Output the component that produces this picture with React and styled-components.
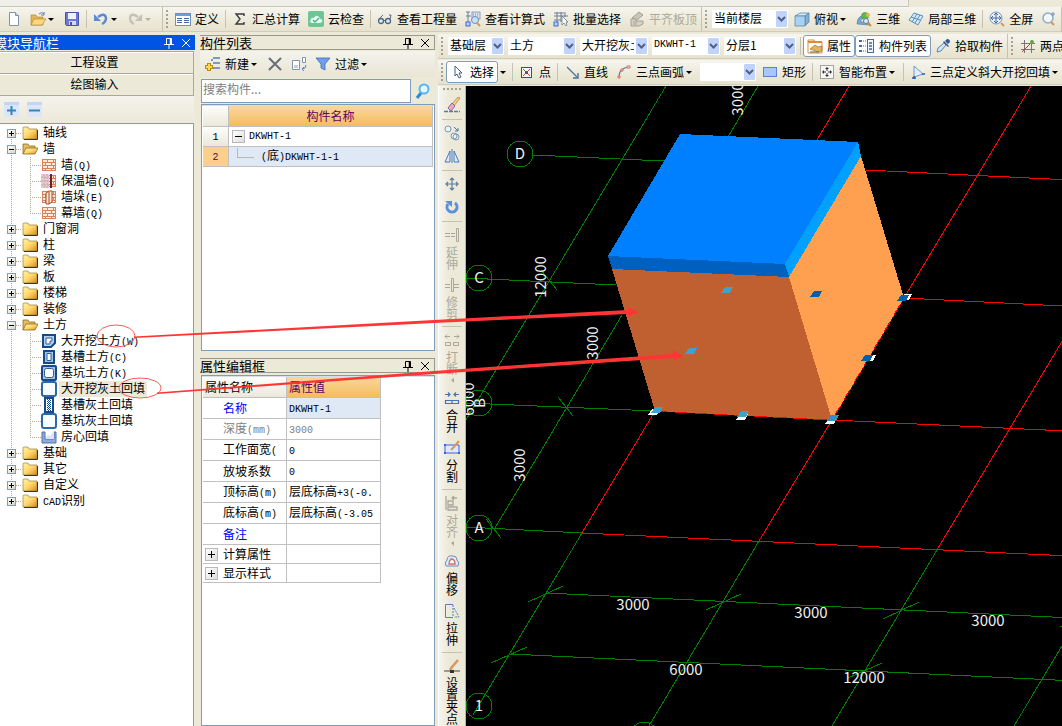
import React from 'react';
import styled, { createGlobalStyle, css } from 'styled-components';

const face = '#ece9d8';
const edge = '#7f9db9';
const line = '#c0c0c0';
const sans = '"Noto Sans CJK SC", "Liberation Sans", sans-serif';

const Global = createGlobalStyle`
  * { box-sizing: border-box; }
  body { margin: 0; background: ${face}; font: 12px/16px ${sans}; color: #000; overflow: hidden; }
  button, input, select { font: inherit; color: inherit; }
  button { background: none; border: 0; padding: 0; margin: 0; white-space: nowrap; }
`;

/* ---------- text ---------- */
const Latin = styled.span`
  font-family: "Liberation Mono", monospace;
  font-size: 10px;
`;
const Txt = ({ children }) =>
  String(children).split(/([\x20-\x7e]+)/).map((s, i) => (i % 2 ? <Latin key={i}>{s}</Latin> : s));

/* ---------- icons ---------- */
const Svg = styled.svg`
  display: block;
  flex: none;
`;
const brick = (
  <>
    <rect x="1" y="2" width="14" height="12" fill="#d8825a" />
    <path d="M2 3h4v2h-4zM7 3h5v2h-5zM13 3h1v2h-1zM2 6h2v2h-2zM5 6h5v2h-5zM11 6h3v2h-3zM2 9h4v2h-4zM7 9h5v2h-5zM13 9h1v2h-1zM2 12h2v1h-2zM5 12h5v1h-5zM11 12h3v1h-3z" fill="#ffe9d8" />
  </>
);
const icons = {
  doc: <><path d="M3.5 1.5h6l3 3v10h-9z" fill="#fdfeff" stroke="#7f93ab" /><path d="M9.5 1.5v3h3" fill="#cdd8e6" stroke="#7f93ab" /></>,
  open: <><path d="M1 14V4h5l1 2h6v8z" fill="#e3b55a" stroke="#a9812f" strokeWidth=".6" /><path d="M1 14l3-6h12l-4 6z" fill="#ffd878" stroke="#a9812f" strokeWidth=".6" /><path d="M9 3q3-3 5 0m0-2v3h-3" fill="none" stroke="#5a7fae" /></>,
  save: <><path d="M1.5 1.5h13v13h-12l-1-1z" fill="#6c78d8" stroke="#4b53a6" /><path d="M4 2h8v6H4z" fill="#eef2fb" /><path d="M5 10h7v4H5z" fill="#d5d9ec" /><path d="M6 11h2v3H6z" fill="#4b53a6" /></>,
  undo: <><path d="M5 6q7-5 8 1 0 4-4 6" fill="none" stroke="#5e88cf" strokeWidth="2.4" /><path d="M1 3v7h7z" fill="#5e88cf" /></>,
  redo: <><path d="M11 6q-7-5-8 1 0 4 4 6" fill="none" stroke="#c4c2b6" strokeWidth="2.4" /><path d="M15 3v7H8z" fill="#c4c2b6" /></>,
  define: <><rect x=".5" y="2.5" width="15" height="12" fill="#fff" stroke="#6f8fbf" /><path d="M1 3h14v2H1z" fill="#6f9be0" /><path d="M2 7.5h5M2 9.5h5M2 11.5h5M9 7.5h5M9 9.5h5M9 11.5h5" stroke="#4468a8" /></>,
  sigma: <path d="M12 5V3H4l4 5-4 5h8v-2" fill="none" stroke="#3a3a3a" strokeWidth="1.4" />,
  cloud: <><rect width="16" height="16" rx="2" fill="#6cc795" /><path d="M4 12q-3-1-1-4 1-2 3-1 2-4 5-1 1 1 1 2 3 0 2 3-1 1-3 1z" fill="#e8fff3" /><path d="M5 9l2 2 4-4" fill="none" stroke="#4bb07c" strokeWidth="1.4" /></>,
  glasses: <><circle cx="4" cy="10" r="2.500" fill="#dfe9f3" stroke="#52657f" strokeWidth="1.300" /><circle cx="11" cy="10" r="2.500" fill="#dfe9f3" stroke="#52657f" strokeWidth="1.300" /><path d="M6.500 9.500h2M2 8l4-4M13 8l1-4h-2" fill="none" stroke="#52657f" /></>,
  formula: <><path d="M1 1h4M1 5h5M3 1v13M1 14h4" stroke="#6b7f9b" /><rect x="7" y="1" width="8" height="7" fill="#dbe4f2" stroke="#7a8faf" strokeWidth=".8" /><path d="M8 3h6M8 5h6" stroke="#7a8faf" strokeDasharray="1" /><circle cx="10" cy="9" r="3.500" fill="#c9e1f7" stroke="#6d90b8" /><path d="M12 12l3 3" stroke="#d59a52" strokeWidth="2" /><rect x="1" y="11" width="4" height="4" fill="#b9d1ff" stroke="#3c68d8" /></>,
  batch: <><path d="M1 2h12M1 5h14M1 9h7M4 1v13M8 1v10M12 3v3" stroke="#6f7f92" /><path d="M9 5v9l2-2 2 3 1-1-1-3h2z" fill="#fff" stroke="#637b98" strokeWidth=".8" /><rect x="1" y="11" width="4" height="4" fill="#b9d1ff" stroke="#3c68d8" /></>,
  align: <><path d="M3 7l7-6 4 3-6 5z" fill="#c9c6b9" stroke="#a3a093" /><path d="M2 8h5v2h7v3l-4 2H2z" fill="#d6d3c6" stroke="#a3a093" /><path d="M4 11h4M4 13h4" stroke="#a3a093" /></>,
  cube: <><path d="M1 5l5-3h9l-4 3z" fill="#cfeaff" stroke="#5f86a8" strokeWidth=".8" /><path d="M11 5l4-3v9l-4 4z" fill="#7fb0d8" stroke="#5f86a8" strokeWidth=".8" /><path d="M1 5h10v10H1z" fill="#a9d2f2" stroke="#5f86a8" strokeWidth=".8" /></>,
  three: <><path d="M1 13q0-6 4-8l2 2q-3 2-2 4l8 0v3z" fill="#78a6d0" stroke="#4a7da8" strokeWidth=".6" /><circle cx="9" cy="5" r="3.500" fill="#66b84d" stroke="#3c8b36" strokeWidth=".6" /><circle cx="12" cy="4" r="2" fill="#e9b44c" /><circle cx="10" cy="10" r="2.500" fill="#d8ecfb" stroke="#5d83a8" /><path d="M12 12l3 3" stroke="#d08a3c" strokeWidth="2" /></>,
  local: <path d="M1 9l5-7 9 3-5 9zM3 6l9 3M9 3l-5 8M12 4l-5 8" fill="#d2e8f8" stroke="#5e8fb8" />,
  full: <><circle cx="7" cy="7" r="6" fill="#e6f0fa" stroke="#7793b8" /><path d="M7 2v10M2 7h10M5 4l2-2 2 2M5 10l2 2 2-2M4 5L2 7l2 2M10 5l2 2-2 2" fill="none" stroke="#496b9c" /><path d="M12 12l3 3" stroke="#d59a52" strokeWidth="2" /></>,
  zoomer: <><circle cx="7" cy="7" r="5" fill="#f3f8fd" stroke="#93a9c4" strokeWidth="1.500" /><path d="M10 11l3 3" stroke="#d59a52" strokeWidth="2" /><path d="M12 1v4M10 3h4" stroke="#7793b8" /></>,
  prop: <><path d="M1 2h6l1 2h7v11H1z" fill="#fff" stroke="#e08b33" /><path d="M1 4h14" stroke="#e08b33" strokeWidth="2" /><path d="M3 11l5-4 3 2 4-1v5l-4 1z" fill="#e2b45c" stroke="#86632a" strokeWidth=".6" /><path d="M3 14h9" stroke="#666" /></>,
  list: <><path d="M0 3h3M0 8h3M0 13h3" stroke="#4168a8" strokeWidth="2" /><path d="M4 3h3M4 8h3M4 13h3" stroke="#4168a8" strokeDasharray="1" /><rect x="8.500" y="1.500" width="6" height="13" fill="#f3f7ff" stroke="#4168a8" /><path d="M10 4h3v2h-3zM10 7h3v2h-3zM10 10h3v2h-3z" fill="#5f88dd" /></>,
  dropper: <><path d="M2 14l1-4 6-5 2 2-5 6z" fill="#cfe5fa" stroke="#5f87b4" /><path d="M8 4l1-1 5 5-1 1zM10 3l2-2q3 0 3 3l-2 2z" fill="#33588f" /></>,
  cross: <><path d="M4.500 2v13M11.500 2v13M1 5.500h14M1 11.500h14" stroke="#777" fill="none" /><path d="M2 14L13 3" stroke="#d04040" /><circle cx="12" cy="4" r="2" fill="#5fa84a" /></>,
  pointer: <path d="M5 2v10l2-2 2 4 2-1-2-4h3z" fill="#fff" stroke="#44607f" />,
  point: <><rect x="2.500" y="3.500" width="10" height="10" fill="#f2f4ff" stroke="#3b4a8c" /><path d="M4 5l7 7M11 5l-7 7" stroke="#d04040" /><circle cx="7.500" cy="8.500" r="1.500" fill="#3b4a8c" /></>,
  lineIcon: <><path d="M3 3l10 10" stroke="#4d6f9e" strokeWidth="1.200" /><path d="M14 9v5H9" fill="none" stroke="#4d6f9e" strokeWidth="1.400" /></>,
  arc: <><path d="M3 13Q3 4 13 3" fill="none" stroke="#5c7ba8" strokeWidth="1.200" /><path d="M2 12h2v2H2zM5 5h2v2H5zM11 2h3v2h-3z" fill="#fff" stroke="#d96a4a" /></>,
  rect: <rect x="1.500" y="3.500" width="13" height="9" fill="#a8c6fb" stroke="#5d82d0" />,
  smart: <><rect x="1.500" y="1.500" width="13" height="13" fill="#f7f7f7" stroke="#555" strokeDasharray="1 1" /><path d="M8 3v4M8 9v4M3 8h4M9 8h4M6.500 4.500h3M6.500 11.500h3M4.500 6.500v3M11.500 6.500v3" stroke="#333" /></>,
  tri3: <><path d="M4 2v11l9-3z" fill="#e2efff" stroke="#6e96cc" /><path d="M2 14h4M4 12v3M12 10h3" stroke="#2e5fa8" strokeWidth="1.500" /></>,
  add: <><path d="M8 2h7M8 7h7M6 12h9M6 4h2" stroke="#7d99bd" strokeWidth="2" /><path d="M4 7v8M0 11h8" stroke="#b78c1c" strokeWidth="4" /><path d="M4 8v6M1 11h6" stroke="#ffd84d" strokeWidth="2" /></>,
  del: <path d="M2 2l12 12M14 2L2 14" stroke="#6a6f76" strokeWidth="2" />,
  copy: <><path d="M1.500 4.500h7v9h-7z" fill="#fff" stroke="#8394a8" /><path d="M3 9h4v3H3z" fill="#c5d0de" /><path d="M11.500 1.500h3v5h-3z" fill="#fff" stroke="#8394a8" /><path d="M15 9q0 4-4 4m2-2l-2 2 2 2" fill="none" stroke="#5b82d6" /></>,
  funnel: <path d="M1 2h14l-5 6v6l-4-2V8z" fill="#6fa0ee" stroke="#4268b6" strokeWidth=".8" />,
  search: <><path d="M6 10l-4 5" stroke="#2a8bd8" strokeWidth="3" /><circle cx="9" cy="6" r="4.500" fill="#e8f6ff" stroke="#56b4f2" strokeWidth="2" /></>,
  plus: <><rect width="15" height="15" fill="#dbe6fb" /><path d="M0 0h15v3H0z" fill="#c6d5f7" /><path d="M7.500 4v9M3 8.500h9" stroke="#2f86c2" strokeWidth="2" /></>,
  minus: <><rect width="15" height="15" fill="#dbe6fb" /><path d="M0 0h15v3H0z" fill="#c6d5f7" /><path d="M2 8.500h11" stroke="#2f86c2" strokeWidth="2" /></>,
  folder: <><path d="M1 3q0-1 1-1h4l1 2h8v10H1z" fill="url(#fold)" stroke="#8c6b28" strokeWidth=".6" /><path d="M15.500 5v9.500H2" fill="none" stroke="#3f3524" /></>,
  folderOpen: <><path d="M1 13V3h5l1 2h6v3" fill="#e6bd5c" stroke="#8c6b28" strokeWidth=".8" /><path d="M1 13l3-6h12l-3 6z" fill="url(#fold)" stroke="#8c6b28" strokeWidth=".8" /></>,
  brick,
  insul: <>{brick}<path d="M0 1h8v14H0z" fill="#e6cfd2" /><path d="M0 4h8M0 8h8M0 12h8M3 1v14M6 1v14" stroke="#c9a0a6" strokeDasharray="2 1" /><path d="M9 1h2v14H9z" fill="#7c1c1c" /></>,
  pier: <>{brick}<path d="M5 4l3-2h3v11l-3 2H5z" fill="#ffe9dc" stroke="#a5491f" /><path d="M8 3v12" stroke="#a5491f" /></>,
  pitL: <><path d="M2 2h12v8l-4 4H2z" fill="#b9cfe8" stroke="#164a86" strokeWidth="2" /><path d="M5 5h6v3H9v3H5z" fill="#fff" stroke="#2b5f9e" /></>,
  trench: <><path d="M3 2h10v12H3z" fill="#a7c3e4" stroke="#164a86" strokeWidth="2" /><path d="M6 4.500h4v7H6z" fill="#fff" stroke="#2b5f9e" /></>,
  pit: <><rect x="1" y="1" width="14" height="14" rx="1" fill="#a7c3e4" stroke="#164a86" strokeWidth="2" /><rect x="3.500" y="3.500" width="9" height="9" rx="2" fill="#fff" stroke="#2b5f9e" /></>,
  fill: <rect x="1" y="1" width="14" height="14" rx="2" fill="#f6fbff" stroke="#2d68a8" strokeWidth="2" />,
  fillTrench: <><path d="M4 1h8v14H4z" fill="#fff" stroke="#164a86" strokeWidth="2" /><path d="M6.500 2v12M8.500 2v12" stroke="#164a86" strokeDasharray="1" /><path d="M7.500 3v12M9.500 3v12" stroke="#164a86" strokeDasharray="1" /></>,
  room: <><path d="M1 3h3v7h9V3h2v11H1z" fill="#8fa9d8" stroke="#5470a8" /><path d="M5 8l2-2 2 1 4-5v8H5z" fill="#d9e5f6" /></>,
  erase: <><path d="M14 0L8 7l2 2 6-8z" fill="#ffd27a" stroke="#8a6a30" strokeWidth=".6" /><path d="M8 6l-4 5 3 3 4-5z" fill="#f0a8c0" stroke="#5a5a90" strokeWidth=".8" /><path d="M0 14.500h16" stroke="#5a7aa8" strokeWidth="1.500" strokeDasharray="4 1" /></>,
  dup: <><circle cx="4" cy="4" r="3" fill="#eef4fb" stroke="#7d97b8" /><path d="M10 2l4 4m0-3v3h-3" fill="none" stroke="#4f78a8" /><circle cx="10" cy="11" r="3" fill="#eef4fb" stroke="#7d97b8" /><circle cx="12" cy="12" r="3" fill="none" stroke="#7d97b8" /></>,
  mirror: <><path d="M6 3v11H1z" fill="#dce9fa" stroke="#4c7bbd" /><path d="M10 3v11h5z" fill="#dce9fa" stroke="#4c7bbd" /><path d="M8 1v14" stroke="#4c7bbd" /></>,
  move: <path d="M8 2v12M2 8h12M6 4l2-2 2 2M6 12l2 2 2-2M4 6L2 8l2 2M12 6l2 2-2 2" fill="none" stroke="#5b7d9e" strokeWidth="1.200" />,
  rotate: <><path d="M4 5a5 5 0 1 0 7-1" fill="none" stroke="#5b8ede" strokeWidth="3" /><path d="M1 2h7v6z" fill="#5b8ede" /></>,
  extend: <path d="M1 6.500h5M1 9.500h5M7 6.500h4M7 9.500h4M12.500 1.500h2v13h-2z" fill="none" stroke="#aaa79a" />,
  trim: <path d="M1 7.500h5M1 10.500h5M7.500 1.500h2v13h-2zM10 7.500h5M10 10.500h5" fill="none" stroke="#aaa79a" />,
  brk: <path d="M6 4.500H1m2-2l-2 2 2 2M10 4.500h5m-2-2l2 2-2 2M1.500 10.500h5v3h-5zM9.500 10.500h5v3h-5z" fill="none" stroke="#aaa79a" />,
  merge: <path d="M1 4.500h5M4 2.500l2 2-2 2M15 4.500h-5m2-2l-2 2 2 2M1.500 10.500h13v3h-13zM8 10v3" fill="none" stroke="#4572b8" strokeWidth="1.200" />,
  split: <><path d="M1 5h14v8H1z" fill="#dfeaff" stroke="#3c5fe0" /><path d="M15 1l-6 7-2 2" stroke="#d29a5a" strokeWidth="2" /><path d="M0 4h2v2H0zM0 12h2v2H0zM14 12h2v2h-2z" fill="#3c5fe0" /></>,
  alignV: <path d="M2 1v14M4 6h5v4H4zM4 12h9v3H4zM13 3H8m2-2L8 3l2 2" fill="none" stroke="#aaa79a" strokeWidth="1.300" />,
  offset: <><path d="M2 13q-2-3 1-6 0-5 6-4 4 0 4 4 3 3 1 6z" fill="#dcebfa" stroke="#6a90b8" /><path d="M5 11q0-3 2-5 4 0 4 5z" fill="#fff" stroke="#d86a6a" strokeWidth="1.400" /></>,
  stretch: <><path d="M9 1.500H1.500v13H9" fill="none" stroke="#5580b8" /><path d="M9 2v12M10 5l5 9h-5" fill="none" stroke="#5580b8" strokeDasharray="2 1" /></>,
  grip: <><path d="M14 2L8 9l-2 3" stroke="#d29a5a" strokeWidth="2.500" /><path d="M0 13h6M10 13h6" stroke="#444" /><rect x="6" y="12" width="4" height="3" fill="#333" /></>,
  pin: <><path d="M5.500 3.500h5v6h-5zM3 9.500h10M8 10v4" fill="none" stroke="currentColor" /><path d="M9.500 4v5" stroke="currentColor" strokeWidth="1.500" /></>,
  close: <path d="M4 4l8 8M12 4l-8 8" fill="none" stroke="currentColor" />,
};
const Icon = ({ name, size = 16 }) => (
  <Svg width={size} height={size} viewBox={`0 0 ${size} ${size}`} aria-hidden="true">{icons[name]}</Svg>
);

/* ---------- toolbars ---------- */
const Bands = styled.div`
  display: flex;
  height: ${(p) => p.$h}px;
  overflow: hidden;
`;
const Band = styled.div`
  display: flex;
  align-items: center;
  flex: ${(p) => (p.$grow ? '1 0 auto' : 'none')};
  height: 25px;
  padding: 0 ${(p) => p.$end || 0}px 0 ${(p) => (p.$bare ? 2 : 3)}px;
  background: linear-gradient(#f6f5ef, #ece9d8 60%, #e6e2cf);
  border-right: 1px solid #c5c2b2;
  border-bottom: 1px solid #cfccbb;
`;
const Grip = styled.span`
  flex: none;
  width: ${(p) => (p.$flat ? 18 : 3)}px;
  height: ${(p) => (p.$flat ? 3 : 18)}px;
  margin-right: ${(p) => (p.$flat ? 0 : 2)}px;
  background: radial-gradient(circle at 1px 1px, #a5a294 1px, transparent 1px) 0 0 / 4px 4px;
`;
const Sep = styled.span`
  flex: none;
  width: 1px;
  height: 18px;
  margin: 0 2px;
  background: #c5c2b0;
`;
const Tool = styled.button`
  display: flex;
  align-items: center;
  flex: none;
  gap: 4px;
  height: 22px;
  padding: 0 4px;
  color: ${(p) => (p.disabled ? '#aca899' : '#000')};
  ${(p) => p.$on && css`
    padding: 0 3px;
    background: #fff;
    border: 1px solid ${edge};
    border-radius: 3px;
  `}
`;
const Caret = styled.span`
  width: 6px;
  height: 3px;
  margin: 0 2px 0 -2px;
  border: solid transparent;
  border-width: 3px 3px 0;
  border-top-color: ${(p) => (p.$dim ? '#b5b2a4' : '#000')};
`;
const DropButton = styled.button`
  display: flex;
  align-items: center;
  flex: none;
  width: 12px;
  height: 22px;
  padding-left: 4px;
`;
const SelectBox = styled.span`
  display: grid;
  flex: none;
  width: ${(p) => p.$w}px;
  height: 18px;
  margin: 0 2px;
  background: #fff;
`;
const SelectField = styled.select`
  grid-area: 1 / 1;
  appearance: none;
  width: 100%;
  border: 0;
  border-radius: 0;
  padding: 0 14px 2px 2px;
  background: transparent;
  line-height: 16px;
  outline: 0;
  ${(p) => p.$mono && css`font: 10px/16px "Liberation Mono", monospace;`}
`;
const Arrow = styled.svg`
  grid-area: 1 / 1;
  justify-self: end;
  align-self: center;
  margin-right: 1px;
  pointer-events: none;
`;
const Combo = ({ w, value, label, mono }) => (
  <SelectBox $w={w}>
    <SelectField aria-label={label} $mono={mono} defaultValue={value}><option>{value}</option></SelectField>
    <Arrow width="11" height="16" viewBox="0 0 11 16">
      <rect width="11" height="16" rx="1" fill="#c2d3fb" />
      <path d="M2 6l3.500 3.500L9 6" fill="none" stroke="#4d6185" strokeWidth="2" />
    </Arrow>
  </SelectBox>
);
const T = ({ icon, children, drop, ...rest }) => (
  <Tool type="button" {...rest}>
    {icon && <Icon name={icon} />}
    {children}
    {drop && <Caret $dim={rest.disabled} />}
  </Tool>
);

/* ---------- page frame ---------- */
const Page = styled.div`
  display: flex;
  flex-direction: column;
  height: 100vh;
  overflow: hidden;
`;
const MenuStrip = styled.div`
  flex: none;
  height: 7px;
  margin-right: 153px;
  background: #f0efea;
  border: solid #cbc8b8;
  border-width: 0 1px 1px 0;
`;
const Main = styled.div`
  display: flex;
  flex: 1;
  min-height: 0;
`;
const Column = styled.div`
  display: flex;
  flex-direction: column;
  flex: none;
  width: ${(p) => p.$w}px;
  margin-right: ${(p) => p.$gap}px;
  padding-top: 1px;
`;
const TitleBar = styled.div`
  display: flex;
  align-items: center;
  flex: none;
  height: 15px;
  font-size: 13px;
  line-height: 15px;
  color: ${(p) => (p.$active ? '#fff' : '#000')};
  background: ${(p) => (p.$active ? '#0054e3' : face)};
  border: ${(p) => (p.$active ? '0' : '1px solid #9a988c')};
  border-left: 0;
`;
const TitleText = styled.span`
  flex: 1;
  margin-left: ${(p) => (p.$cut ? -6 : 0)}px;
`;
const TitleButton = styled.button`
  width: 17px;
  height: 15px;
`;
const Title = ({ active, children }) => (
  <TitleBar $active={active}>
    <TitleText $cut={active}>{children}</TitleText>
    <TitleButton type="button" aria-label="固定"><Icon name="pin" /></TitleButton>
    <TitleButton type="button" aria-label="关闭"><Icon name="close" /></TitleButton>
  </TitleBar>
);
const Spacer = styled.div`
  flex: none;
  height: ${(p) => p.$h || 2}px;
`;

/* ---------- navigation ---------- */
const NavButton = styled.button`
  flex: none;
  height: 22px;
  margin-right: 1px;
  padding: 0 4px 2px 0;
  background: ${face};
  border: 1px solid #aca899;
  border-width: 1px 1px 0 0;
  box-shadow: inset 0 1px #fff;
`;
const NavTools = styled.div`
  display: flex;
  align-items: center;
  flex: none;
  gap: 8px;
  height: 28px;
  margin-right: 1px;
  padding-left: 4px;
  border-top: 1px solid #aca899;
  background: linear-gradient(#f4f3ec, #ece9d8);
`;
const Tree = styled.ul`
  flex: 1;
  min-height: 0;
  overflow: hidden;
  margin: 0 1px 0 0;
  padding: 1px 0;
  list-style: none;
  background: #fff;
  border: solid ${edge};
  border-width: 1px 1px 0 0;
`;
const Kids = styled.ul`
  margin: 0;
  padding: 0;
  list-style: none;
`;
const Row = styled.div`
  display: flex;
  align-items: center;
  height: 16px;
`;
const dots = 'linear-gradient(#a9a693 50%, transparent 0)';
const mask = 'linear-gradient(#fff, #fff)';
const Trunk = styled.span`
  display: flex;
  align-items: center;
  flex: none;
  width: ${(p) => p.$w}px;
  height: 16px;
  padding-left: ${(p) => p.$pad || 0}px;
  background:
    ${(p) => (p.$end === 'first' ? `${mask} 0 0 / 100% 8px no-repeat,` : '')}
    ${(p) => (p.$end === 'last' ? `${mask} 0 9px / 100% 8px no-repeat,` : '')}
    ${dots} ${(p) => p.$x}px 0 / 1px 2px repeat-y;
`;
const Dash = styled.span`
  flex: 1;
  height: 1px;
  background: linear-gradient(90deg, #a9a693 50%, transparent 0) 0 0 / 2px 1px;
`;
const Toggle = styled.button`
  width: 9px;
  height: 9px;
  border: 1px solid ${edge};
  background:
    linear-gradient(#000, #000) 1px 3px / 5px 1px no-repeat,
    ${(p) => (p.$open ? '' : 'linear-gradient(#000, #000) 3px 1px / 1px 5px no-repeat,')}
    linear-gradient(135deg, #fff, #d8d4c4);
`;
const Label = styled.span`
  height: 16px;
  padding: 0 2px 2px;
  margin-left: ${(p) => (p.$sub ? 2 : 3)}px;
  line-height: 14px;
  white-space: nowrap;
  background: ${(p) => (p.$sel ? face : 'transparent')};
`;
const tree = [
  ['轴线'],
  ['墙', [['墙(Q)', 'brick'], ['保温墙(Q)', 'insul'], ['墙垛(E)', 'pier'], ['幕墙(Q)', 'brick']]],
  ['门窗洞'], ['柱'], ['梁'], ['板'], ['楼梯'], ['装修'],
  ['土方', [['大开挖土方(W)', 'pitL'], ['基槽土方(C)', 'trench'], ['基坑土方(K)', 'pit'], ['大开挖灰土回填', 'fill', true],
    ['基槽灰土回填', 'fillTrench'], ['基坑灰土回填', 'fill'], ['房心回填', 'room']]],
  ['基础'], ['其它'], ['自定义'], ['CAD识别'],
];
const Navigation = () => (
  <Column $w={195} $gap={5}>
    <Title active>模块导航栏</Title>
    <Spacer $h={1} />
    <NavButton type="button">工程设置</NavButton>
    <NavButton type="button">绘图输入</NavButton>
    <NavTools>
      <button type="button" aria-label="展开"><Icon name="plus" size={15} /></button>
      <button type="button" aria-label="折叠"><Icon name="minus" size={15} /></button>
    </NavTools>
    <Tree>
      {tree.map(([name, kids], i) => (
        <li key={name}>
          <Row>
            <Trunk $w={22} $pad={7} $x={11} $end={i === 0 ? 'first' : i === tree.length - 1 ? 'last' : ''}>
              <Toggle type="button" $open={!!kids} aria-label={name} /><Dash />
            </Trunk>
            <Icon name={kids ? 'folderOpen' : 'folder'} />
            <Label><Txt>{name}</Txt></Label>
          </Row>
          {kids && (
            <Kids>
              {kids.map(([kid, icon, sel], k) => (
                <Row as="li" key={kid}>
                  <Trunk $w={30} $x={11} />
                  <Trunk $w={11} $x={0} $end={k === kids.length - 1 ? 'last' : ''}><Dash /></Trunk>
                  <Icon name={icon} />
                  <Label $sub $sel={sel}><Txt>{kid}</Txt></Label>
                </Row>
              ))}
            </Kids>
          )}
        </li>
      ))}
    </Tree>
  </Column>
);

/* ---------- component list and properties ---------- */
const ListTools = styled.div`
  display: flex;
  align-items: center;
  flex: none;
  height: 26px;
  padding-left: 1px;
  background: linear-gradient(#f4f3ec, #e8e5d4);
`;
const SearchRow = styled.div`
  display: flex;
  align-items: center;
  flex: none;
  height: 27px;
  padding: 0 4px 0 1px;
  gap: 4px;
`;
const SearchInput = styled.input`
  flex: 1;
  min-width: 0;
  height: 24px;
  padding: 0 2px 4px 1px;
  border: 1px solid ${edge};
  background: #fff;
  outline: 0;
  &::placeholder { color: #808080; opacity: 1; }
`;
const Panel = styled.div`
  flex: ${(p) => (p.$fill ? '1' : 'none')};
  height: ${(p) => p.$h}px;
  margin-left: 1px;
  padding: 1px;
  overflow: hidden;
  background: #fff;
  border: 1px solid ${edge};
  box-shadow: inset 0 1px #d4e0ec;
`;
const Table = styled.table`
  width: ${(p) => p.$w};
  table-layout: fixed;
  border-spacing: 0;
`;
const Cell = styled.td`
  height: ${(p) => p.$h}px;
  padding: 0 0 0 ${(p) => p.$pad || 0}px;
  overflow: hidden;
  white-space: nowrap;
  line-height: 16px;
  text-align: ${(p) => p.$align || 'left'};
  color: ${(p) => p.$color || '#000'};
  background: ${(p) => p.$bg || '#fff'};
  border: solid ${line};
  border-width: 0 1px 1px 0;
  font-weight: 400;
`;
const Inline = styled.span`
  display: flex;
  align-items: center;
  gap: ${(p) => p.$gap || 0}px;
`;
const BoxToggle = styled.button`
  flex: none;
  width: 13px;
  height: 13px;
  border: 1px solid #b8b8b8;
  background:
    linear-gradient(#000, #000) 2px 5px / 7px 1px no-repeat,
    ${(p) => (p.$open ? '' : 'linear-gradient(#000, #000) 5px 2px / 1px 7px no-repeat,')}
    linear-gradient(135deg, #fff, #ddd);
`;
const Elbow = styled.span`
  flex: none;
  width: 17px;
  height: 10px;
  margin-bottom: 8px;
  border: solid #b8b8b8;
  border-width: 0 0 1px 1px;
`;
const gold = 'linear-gradient(#fbd69c, #f2bd5e)';
const pale = '#dfe8f5';
const headBg = 'linear-gradient(#fdfdfb, #ebe8da)';
const props = [
  ['名称', 'DKWHT-1', '#00f', '#000', pale],
  ['深度(mm)', '3000', '#808080', '#808080'],
  ['工作面宽(', '0'],
  ['放坡系数', '0'],
  ['顶标高(m)', '层底标高+3(-0.'],
  ['底标高(m)', '层底标高(-3.05'],
  ['备注', '', '#00f'],
];
const Components = () => (
  <Column $w={235} $gap={3}>
    <Title>构件列表</Title>
    <Spacer $h={1} />
    <ListTools>
      <T icon="add" drop>新建</T>
      <T icon="del" aria-label="删除" />
      <T icon="copy" aria-label="复制" />
      <T icon="funnel" drop>过滤</T>
    </ListTools>
    <SearchRow>
      <SearchInput aria-label="搜索构件" placeholder="搜索构件..." />
      <button type="button" aria-label="搜索"><Icon name="search" /></button>
    </SearchRow>
    <Panel $h={247}>
      <Table $w="100%">
        <colgroup><col width="26" /><col /></colgroup>
        <thead>
          <tr><Cell as="th" $h={21} $bg={headBg} /><Cell as="th" $h={21} $align="center" $bg={gold} $color="#600060">构件名称</Cell></tr>
        </thead>
        <tbody>
          <tr>
            <Cell $h={19} $align="center" $bg={headBg}><Latin>1</Latin></Cell>
            <Cell $h={19} $pad={3}><Inline $gap={4}><BoxToggle type="button" $open aria-label="DKWHT-1" /><Latin>DKWHT-1</Latin></Inline></Cell>
          </tr>
          <tr>
            <Cell $h={19} $align="center" $bg="#fcd08a" $color="#600060"><Latin>2</Latin></Cell>
            <Cell $h={19} $pad={8} $bg={pale}><Inline $gap={7}><Elbow /><span><Txt>(底)DKWHT-1-1</Txt></span></Inline></Cell>
          </tr>
        </tbody>
      </Table>
    </Panel>
    <Spacer $h={7} />
    <Title>属性编辑框</Title>
    <Spacer />
    <Panel $fill>
      <Table $w="178px">
        <colgroup><col width="84" /><col /></colgroup>
        <thead>
          <tr><Cell as="th" $h={21} $pad={2} $bg={headBg}>属性名称</Cell><Cell as="th" $h={21} $pad={2} $bg={gold} $color="#600060">属性值</Cell></tr>
        </thead>
        <tbody>
          {props.map(([name, value, c1, c2, bg]) => (
            <tr key={name}>
              <Cell $h={21} $pad={20} $color={c1}><Txt>{name}</Txt></Cell>
              <Cell $h={21} $pad={2} $color={c2} $bg={bg}><Txt>{value}</Txt></Cell>
            </tr>
          ))}
          {['计算属性', '显示样式'].map((name) => (
            <tr key={name}>
              <Cell $h={19} $pad={2}><Inline $gap={5}><BoxToggle type="button" aria-label={name} />{name}</Inline></Cell>
              <Cell $h={19} />
            </tr>
          ))}
        </tbody>
      </Table>
    </Panel>
  </Column>
);

/* ---------- edit tools beside the canvas ---------- */
const Work = styled.div`
  display: flex;
  flex-direction: column;
  flex: 1;
  min-width: 0;
`;
const Stage = styled.div`
  display: flex;
  flex: 1;
  min-height: 0;
`;
const Rail = styled.div`
  display: flex;
  flex-direction: column;
  align-items: center;
  flex: none;
  width: 28px;
  padding-top: 2px;
  overflow: hidden;
  background: linear-gradient(90deg, #f6f5ef, #ece9d8 40%);
  border: solid #fff;
  border-right-color: #b9b6a6;
  border-width: 0 1px;
`;
const RailButton = styled.button`
  display: flex;
  flex-direction: column;
  align-items: center;
  flex: none;
  gap: 3px;
  padding: 3px 0 4px;
  color: ${(p) => (p.disabled ? '#aca899' : '#000')};
`;
const RailText = styled.span`
  width: 12px;
  line-height: 12px;
  white-space: normal;
  word-break: break-all;
`;
const RailSep = styled.span`
  flex: none;
  width: 20px;
  height: 1px;
  margin: 2px 0;
  background: #c5c2b0;
`;
const RailCaret = styled.span`
  height: 5px;
  border: solid transparent;
  border-width: 2px 3px 3px 0;
  border-right-color: #aca899;
`;
const RailItem = ({ icon, text, off, drop, name }) => (
  <RailButton type="button" disabled={off} aria-label={text || name}>
    <Icon name={icon} />
    {text && <RailText>{text}</RailText>}
    {drop && <RailCaret />}
  </RailButton>
);

/* ---------- drawing ---------- */
const Canvas = styled.svg`
  display: block;
  flex: 1;
  min-width: 0;
  height: 100%;
  background: #000;
  font: 15px ${sans};
`;
const greens = [
  'M533 155L664 161', 'M466 278L616 285', 'M466 403L655 411', 'M466 527L582 533',
  'M546 593L1600 643', 'M510 654L1600 706',
  'M473 715L582 533', 'M649 726L759 541', 'M832 726L937 550', 'M1014 726L1062 646',
  'M666 86L466 420', 'M758 86L728 137', 'M622 315L495 528',
  'M541 270L557 290', 'M558 397L573 416', 'M486 519L501 538',
  'M528 602L563 586', 'M706 610L741 594', 'M883 619L919 602', 'M491 663L527 647', 'M848 678L882 663', 'M1060 627L1072 622',
];
const reds = [
  'M866 170L1600 206', 'M904 298L1600 333', 'M655 411L832 420L1600 456', 'M582 533L1600 581',
  'M582 533L655 411', 'M759 541L832 420', 'M937 550L1215 86', 'M904 298L1031 86', 'M849 86L817 140', 'M832 420L904 298',
];
const axes = [['D', 520, 154], ['C', 479, 278], ['B', 479, 403, true], ['A', 479, 528], ['1', 479, 706], ['', 644, 735]];
const dims = [['3000', 633, 604], ['3000', 811, 612], ['3000', 988, 620], ['6000', 686, 669], ['12000', 864, 677]];
const dimsUp = [['3000', 737, 99], ['12000', 540, 277], ['3000', 592, 343], ['6000', 468, 399], ['3000', 519, 465]];
const grips = [
  [727, 290, '#40a0d0'], [691, 351, '#40a0d0'], [816, 294, '#0060b0'],
  [654, 412, '#fff'], [657, 410, '#40a0d0'], [742, 417, '#fff'], [743, 414, '#40a0d0'],
  [831, 421, '#fff'], [833, 418, '#3090c0'], [870, 358, '#fff'], [867, 358, '#0060b0'], [906, 297, '#fff'], [903, 298, '#0060b0'],
];
const Drawing = () => (
  <Canvas role="img" aria-label="三维视图">
    <g transform="translate(-466 -86)">
      <g fill="none" stroke="#008000" shapeRendering="crispEdges">
        {greens.map((d) => <path key={d} d={d} />)}
        {axes.map(([t, x, y]) => <circle key={t} cx={x} cy={y} r="13" />)}
      </g>
      <g fill="none" stroke="#f00" shapeRendering="crispEdges">{reds.map((d) => <path key={d} d={d} />)}</g>
      <g fill="#f0f0f0" textAnchor="middle">
        {dims.map(([t, x, y]) => <text key={t + x} x={x} y={y + 6}>{t}</text>)}
        {dimsUp.map(([t, x, y]) => <text key={t + x} transform={`translate(${x + 6} ${y}) rotate(-90)`}>{t}</text>)}
        {axes.map(([t, x, y, up]) => (
          <text key={t} transform={`translate(${up ? x + 6 : x} ${up ? y : y + 5})${up ? ' rotate(-90)' : ''}`}>{t}</text>
        ))}
      </g>
      <g shapeRendering="crispEdges">
        <path d="M612 269L789 277L832 420L655 411z" fill="#c06030" />
        <path d="M861 156L904 298L832 420L789 277z" fill="#ffa050" />
        <path d="M608 256L785 264L789 277L612 269z" fill="#0060c0" />
        <path d="M858 142L861 156L789 277L785 264z" fill="#00a0ff" />
        <path d="M680 134L858 142L785 264L608 256z" fill="#0080ff" />
        <path d="M655 411L832 420L904 298" fill="none" stroke="#f00" strokeDasharray="12 8" />
        {grips.map(([x, y, c], i) => <path key={i} d={`M${x - 6} ${y + 3}l4-6h8l-3 6z`} fill={c} />)}
      </g>
    </g>
  </Canvas>
);

const Notes = styled.svg`
  position: absolute;
  inset: 0;
  width: 100%;
  height: 100%;
  pointer-events: none;
`;
const Defs = () => (
  <defs>
    <linearGradient id="fold" x1="0" y1="0" x2="1" y2="1">
      <stop offset="0" stopColor="#fff3ae" /><stop offset=".5" stopColor="#ffd868" /><stop offset="1" stopColor="#d48b1c" />
    </linearGradient>
  </defs>
);

export default function App() {
  return (
    <Page>
      <Global />
      <MenuStrip />
      <Bands $h={27}>
        <Band $bare $end={5}>
          <T icon="doc" aria-label="新建" />
          <T icon="open" drop aria-label="打开" />
          <T icon="save" aria-label="保存" />
          <Sep />
          <T icon="undo" drop aria-label="撤销" />
          <T icon="redo" drop disabled aria-label="恢复" />
        </Band>
        <Band>
          <Grip />
          <T icon="define">定义</T>
          <Sep />
          <T icon="sigma">汇总计算</T>
          <T icon="cloud">云检查</T>
          <Sep />
          <T icon="glasses">查看工程量</T>
          <T icon="formula">查看计算式</T>
          <T icon="batch">批量选择</T>
          <T icon="align" disabled>平齐板顶</T>
        </Band>
        <Band $grow>
          <Grip />
          <Combo w={76} value="当前楼层" label="楼层范围" />
          <T icon="cube" drop>俯视</T>
          <T icon="three">三维</T>
          <T icon="local">局部三维</T>
          <Sep />
          <T icon="full">全屏</T>
          <T icon="zoomer" aria-label="缩放" />
        </Band>
      </Bands>
      <Main>
        <Navigation />
        <Components />
        <Work>
          <Bands $h={26}>
            <Band>
              <Grip />
              <Combo w={56} value="基础层" label="楼层" />
              <Combo w={68} value="土方" label="类型" />
              <Combo w={68} value="大开挖灰土回填" label="构件类型" />
              <Combo w={68} value="DKWHT-1" label="构件" mono />
              <Combo w={72} value="分层1" label="分层" />
              <Sep />
              <T icon="prop" $on>属性</T>
              <T icon="list" $on>构件列表</T>
              <T icon="dropper">拾取构件</T>
            </Band>
            <Band $grow>
              <Grip />
              <T icon="cross">两点</T>
            </Band>
          </Bands>
          <Bands $h={26}>
            <Band $grow>
              <Grip />
              <T icon="pointer" $on>选择</T>
              <DropButton type="button" aria-label="选择方式"><Caret /></DropButton>
              <Sep />
              <T icon="point">点</T>
              <Sep />
              <T icon="lineIcon">直线</T>
              <T icon="arc" drop>三点画弧</T>
              <Combo w={56} value="" label="半径" />
              <T icon="rect">矩形</T>
              <Sep />
              <T icon="smart" drop>智能布置</T>
              <Sep />
              <T icon="tri3" drop>三点定义斜大开挖回填</T>
            </Band>
          </Bands>
          <Stage>
            <Rail>
              <Grip $flat />
              <Spacer $h={3} />
              <RailItem icon="erase" name="删除" />
              <RailSep />
              <RailItem icon="dup" name="复制" />
              <RailItem icon="mirror" name="镜像" />
              <RailSep />
              <RailItem icon="move" name="移动" />
              <RailItem icon="rotate" name="旋转" />
              <RailSep />
              <RailItem icon="extend" text="延伸" off />
              <RailItem icon="trim" text="修剪" off />
              <RailSep />
              <RailItem icon="brk" text="打断" off drop />
              <RailItem icon="merge" text="合并" />
              <RailItem icon="split" text="分割" />
              <RailSep />
              <RailItem icon="alignV" text="对齐" off drop />
              <RailItem icon="offset" text="偏移" />
              <RailItem icon="stretch" text="拉伸" />
              <RailSep />
              <RailItem icon="grip" text="设置夹点" />
            </Rail>
            <Drawing />
          </Stage>
        </Work>
      </Main>
      <Notes aria-hidden="true">
        <Defs />
        <g fill="none" stroke="#ff5a5a" strokeWidth="1">
          <ellipse cx="116" cy="336" rx="19" ry="11" />
          <ellipse cx="140" cy="388" rx="21" ry="10" />
        </g>
        <g fill="#ff3535">
          <path d="M134 336.500L434 320L628 310V307L638 312L628 317V314L434 323L134 338z" />
          <path d="M157 392.500L434 371L673 354V350L683 356L673 361V358L434 374L157 394z" />
        </g>
      </Notes>
    </Page>
  );
}
